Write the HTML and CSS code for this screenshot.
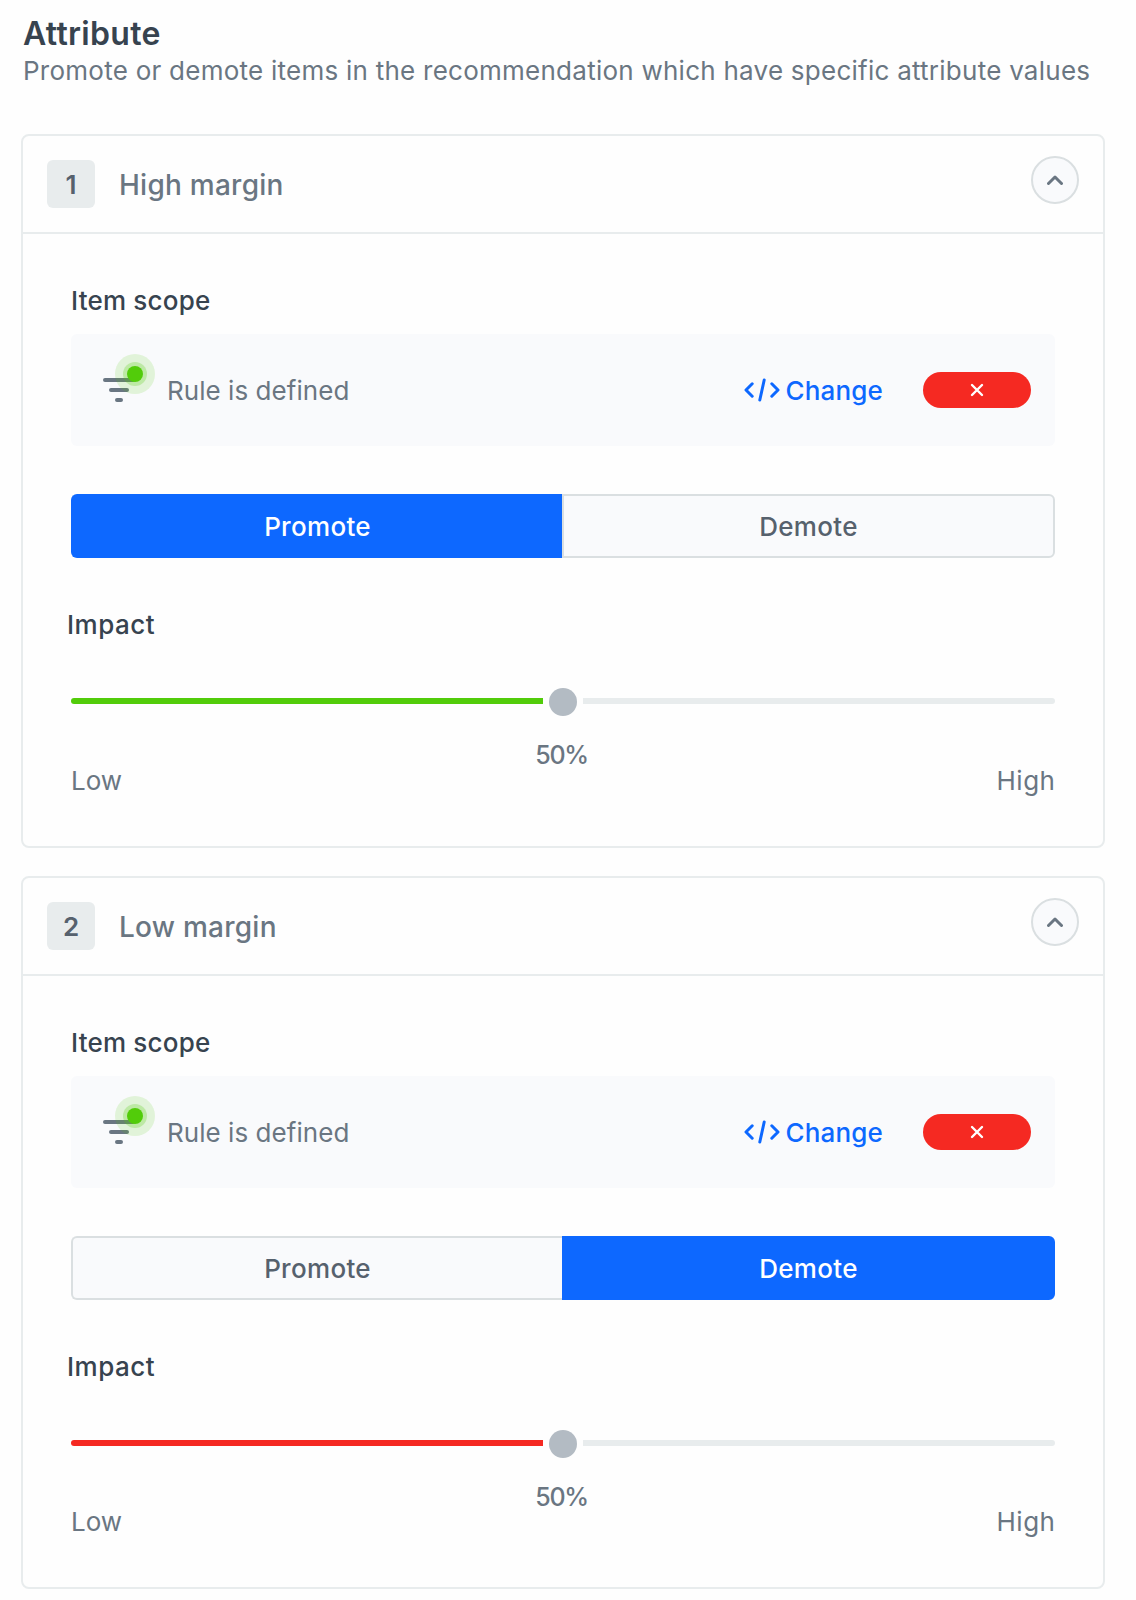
FILE: index.html
```html
<!DOCTYPE html>
<html lang="en">
<head>
<meta charset="utf-8">
<title>Attribute</title>
<link rel="stylesheet" href="styles.css">
</head>
<body>
<svg class="sprite" width="0" height="0" aria-hidden="true">
  <symbol id="chevron" viewBox="0 0 16 10"><path d="M1.500 8.500 8 2l6.500 6.500" fill="none" stroke="currentColor" stroke-width="3" stroke-linecap="round" stroke-linejoin="round"/></symbol>
  <symbol id="filter" viewBox="0 0 52 52">
    <path d="M2 26h28M8 36h16M14 46h4" fill="none" stroke="#6a7682" stroke-width="4" stroke-linecap="round"/>
    <circle cx="32" cy="20" r="20" fill="#52cc0a" fill-opacity=".14"/>
    <circle cx="32" cy="20" r="12" fill="#52cc0a" fill-opacity=".25"/>
    <circle cx="32" cy="20" r="8" fill="#52cc0a"/>
  </symbol>
  <symbol id="code" viewBox="0 0 36 24"><path d="M8.200 5.800 2 12l6.200 6.200M27.800 5.800 34 12l-6.200 6.200M20.200 2l-4.400 20" fill="none" stroke="currentColor" stroke-width="3" stroke-linecap="round" stroke-linejoin="round"/></symbol>
  <symbol id="cross" viewBox="0 0 14 14"><path d="m2 2 10 10M12 2 2 12" fill="none" stroke="currentColor" stroke-width="2.400" stroke-linecap="round"/></symbol>
</svg>
<main class="page">
  <h1 class="title">Attribute</h1>
  <p class="subtitle">Promote or demote items in the recommendation which have specific attribute values</p>

  <section class="card">
    <header class="card-head">
      <span class="badge">1</span>
      <h2 class="name">High margin</h2>
      <button class="collapse" aria-label="Collapse"><svg width="16" height="10"><use href="#chevron"/></svg></button>
    </header>
    <div class="card-body">
      <h3 class="label scope-label">Item scope</h3>
      <div class="scope">
        <svg class="filter" width="52" height="52"><use href="#filter"/></svg>
        <span class="rule">Rule is defined</span>
        <a class="change"><svg width="36" height="24"><use href="#code"/></svg><span class="change-text">Change</span></a>
        <button class="remove" aria-label="Remove"><svg width="14" height="14"><use href="#cross"/></svg></button>
      </div>
      <div class="toggle">
        <button class="option active">Promote</button>
        <button class="option demote">Demote</button>
      </div>
      <h3 class="label impact-label">Impact</h3>
      <div class="slider">
        <span class="track fill-green"></span>
        <span class="thumb"></span>
        <span class="track rest"></span>
      </div>
      <div class="value">50%</div>
      <div class="range"><span class="low">Low</span><span class="high">High</span></div>
    </div>
  </section>

  <section class="card last">
    <header class="card-head">
      <span class="badge">2</span>
      <h2 class="name">Low margin</h2>
      <button class="collapse" aria-label="Collapse"><svg width="16" height="10"><use href="#chevron"/></svg></button>
    </header>
    <div class="card-body">
      <h3 class="label scope-label">Item scope</h3>
      <div class="scope">
        <svg class="filter" width="52" height="52"><use href="#filter"/></svg>
        <span class="rule">Rule is defined</span>
        <a class="change"><svg width="36" height="24"><use href="#code"/></svg><span class="change-text">Change</span></a>
        <button class="remove" aria-label="Remove"><svg width="14" height="14"><use href="#cross"/></svg></button>
      </div>
      <div class="toggle">
        <button class="option">Promote</button>
        <button class="option demote active">Demote</button>
      </div>
      <h3 class="label impact-label">Impact</h3>
      <div class="slider">
        <span class="track fill-red"></span>
        <span class="thumb"></span>
        <span class="track rest"></span>
      </div>
      <div class="value">50%</div>
      <div class="range"><span class="low">Low</span><span class="high">High</span></div>
    </div>
  </section>
</main>
</body>
</html>
```
FILE: styles.css
```css
* { box-sizing: border-box; margin: 0; padding: 0; }
body {
  background: #fefefe;
  color: #6a7682;
  font-family: Inter, "Liberation Sans", sans-serif;
  font-size: 26px;
  line-height: 32px;
}
button { font: inherit; color: inherit; border: 0; background: none; }
svg { display: block; flex: none; }
.sprite { position: absolute; }
.page { width: 1136px; height: 1600px; padding: 14px 31px 0 21px; overflow: hidden; }

.title { padding-left: 2px; color: #37434f; font-size: 32px; font-weight: 600; line-height: 40px; letter-spacing: 0.3px; }
.subtitle { height: 80px; padding: 1px 0 0 2px; font-weight: 400; white-space: nowrap; letter-spacing: 0.25px; }

.card { height: 714px; margin-bottom: 28px; border: 2px solid #e8eced; border-radius: 8px; }
.card.last { height: 713px; margin-bottom: 0; }
.card-head { display: flex; height: 98px; padding: 0 24px; border-bottom: 2px solid #e8eced; }
.badge { width: 48px; height: 48px; margin-top: 24px; padding-top: 1px; border-radius: 6px; background: #e8eced; color: #56616d; font-weight: 600; line-height: 48px; text-align: center; }
.name { flex: 1; margin: 33px 0 0 24px; font-size: 28px; font-weight: 500; letter-spacing: 0.25px; }
.collapse { display: flex; align-items: center; justify-content: center; width: 48px; height: 48px; margin-top: 20px; border: 2px solid #dadfe1; border-radius: 50%; background: #f9fafc; }

.card-body { padding: 0 48px; }
.label { color: #37434f; font-size: 26px; font-weight: 500; letter-spacing: 0.2px; }
.scope-label { padding: 51px 0 17px; }
.scope { display: flex; align-items: center; height: 112px; padding: 0 24px 0 32px; border-radius: 6px; background: #f9fafc; }
.filter { margin-top: -20px; }
.rule { flex: 1; margin-left: 12px; padding-top: 2px; font-weight: 400; letter-spacing: 0.05px; }
.change { display: flex; align-items: center; gap: 6px; margin-right: 40px; color: #0d68ff; font-weight: 500; letter-spacing: 0.15px; }
.change-text { padding-top: 2px; }
.remove { display: flex; align-items: center; justify-content: center; width: 108px; height: 36px; border-radius: 18px; background: #f52922; color: #fff; }

.toggle { display: flex; height: 64px; margin-top: 48px; }
.option { width: 491px; padding-top: 2px; border: 2px solid #dadfe1; border-right: 0; border-radius: 6px 0 0 6px; background: #f9fafc; color: #56616d; font-weight: 500; letter-spacing: 0.3px; }
.option.demote { width: 493px; border-right: 2px solid #dadfe1; border-radius: 0 6px 6px 0; }
.option.active { border-color: #0d68ff; background: #0d68ff; color: #fff; }

.impact-label { margin: 51px 0 0 -4px; letter-spacing: 0.5px; }
.slider { display: flex; align-items: center; height: 28px; margin-top: 47px; }
.track { flex: 1; height: 6px; margin-bottom: 2px; }
.fill-green { border-radius: 3px 0 0 3px; background: #52cc0a; }
.fill-red { border-radius: 3px 0 0 3px; background: #f52922; }
.rest { border-radius: 0 3px 3px 0; background: #e8eced; }
.thumb { width: 28px; height: 28px; margin: 0 6px; border-radius: 50%; background: #b3bbc3; }
.value { margin-top: 23px; padding-right: 3px; font-size: 25px; font-weight: 500; letter-spacing: -1.300px; text-align: center; }
.range { display: flex; justify-content: space-between; margin-top: -6px; font-weight: 400; }
.last .range { margin-top: -7px; }
.high { margin-right: -0.5px; letter-spacing: 0.5px; }
```
